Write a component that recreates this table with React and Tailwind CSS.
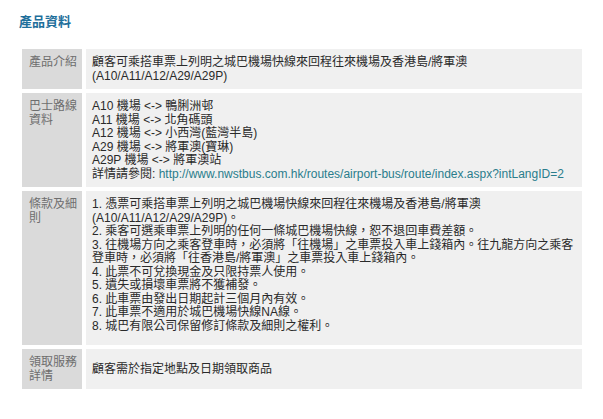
import React from 'react';

const rows = [
  {
    label: '產品介紹',
    body: (
      <>
        顧客可乘搭車票上列明之城巴機場快線來回程往來機場及香港島/將軍澳
        <br />
        (A10/A11/A12/A29/A29P)
      </>
    ),
  },
  {
    label: '巴士路線資料',
    body: (
      <>
        A10 機場 &lt;-&gt; 鴨脷洲邨
        <br />
        A11 機場 &lt;-&gt; 北角碼頭
        <br />
        A12 機場 &lt;-&gt; 小西灣(藍灣半島)
        <br />
        A29 機場 &lt;-&gt; 將軍澳(寶琳)
        <br />
        A29P 機場 &lt;-&gt; 將軍澳站
        <br />
        詳情請參閱:{' '}
        <a href="#" className="text-[#2a7d8c]">
          http://www.nwstbus.com.hk/routes/airport-bus/route/index.aspx?intLangID=2
        </a>
      </>
    ),
  },
  {
    label: '條款及細則',
    extra: 'pb-[12px]',
    body: (
      <>
        1. 憑票可乘搭車票上列明之城巴機場快線來回程往來機場及香港島/將軍澳
        <br />
        (A10/A11/A12/A29/A29P)。
        <br />
        2. 乘客可選乘車票上列明的任何一條城巴機場快線，恕不退回車費差額。
        <br />
        3. 往機場方向之乘客登車時，必須將「往機場」之車票投入車上錢箱內。往九龍方向之乘客
        <br />
        登車時，必須將「往香港島/將軍澳」之車票投入車上錢箱內。
        <br />
        4. 此票不可兌換現金及只限持票人使用。
        <br />
        5. 遺失或損壞車票將不獲補發。
        <br />
        6. 此車票由發出日期起計三個月內有效。
        <br />
        7. 此車票不適用於城巴機場快線NA線。
        <br />
        8. 城巴有限公司保留修訂條款及細則之權利。
      </>
    ),
  },
  {
    label: '領取服務詳情',
    center: true,
    body: <>顧客需於指定地點及日期領取商品</>,
  },
];

export default function App() {
  return (
    <div
      className="w-[603px] h-[419px] bg-white text-[12px] leading-[13.5px]"
      style={{ fontFamily: '"Liberation Sans", "Noto Sans CJK TC", sans-serif' }}
    >
      <h2 className="pt-[14px] pl-[19px] text-[13px] leading-[15px] font-bold text-[#1e6f9b]">
        產品資料
      </h2>
      <div className="mt-[20px] ml-[22px] w-[560px] grid grid-cols-[60px_1fr] gap-1">
        {rows.map((r) => (
          <React.Fragment key={r.label}>
            <div className="bg-[#dadada] text-[#6e6e6e] pl-[7px] pr-[5px] pt-[7px] pb-[6px]">
              {r.label}
            </div>
            <div
              className={`bg-[#f0f0f0] text-[#2a2a2a] px-[6px] pt-[7px] pb-[6px] whitespace-nowrap ${
                r.center ? 'flex items-center' : ''
              } ${r.extra || ''}`}
            >
              <div>{r.body}</div>
            </div>
          </React.Fragment>
        ))}
      </div>
    </div>
  );
}
